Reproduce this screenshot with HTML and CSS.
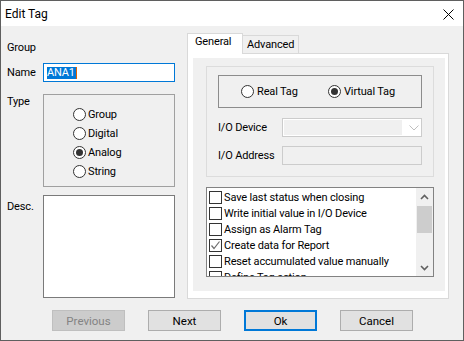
FILE: index.html
```html
<!DOCTYPE html>
<html lang="en">
<head>
    <meta charset="UTF-8">
    <meta name="viewport" content="width=device-width, initial-scale=1.0">
    <title>Edit Tag</title>
    <link rel="stylesheet" href="styles.css">
</head>
<body>
    <div class="window">
        <div class="titlebar">
            <span class="title">Edit Tag</span>
            <svg class="close" width="11" height="11" viewBox="0 0 11 11">
                <path d="M0.5 0.5 L10.5 10.5 M10.5 0.5 L0.5 10.5" stroke="#000" stroke-width="1" fill="none"/>
            </svg>
        </div>

        <div class="client">
            <div class="main">
                <div class="left">
                    <div class="row group-row"><span class="label">Group</span></div>
                    <div class="row name-row">
                        <span class="label">Name</span>
                        <div class="input focused"><span class="selected">ANA1</span><span class="caret"></span></div>
                    </div>
                    <div class="row type-row">
                        <span class="label">Type</span>
                        <div class="type-box">
                            <div class="radio"><span class="dot"></span>Group</div>
                            <div class="radio"><span class="dot"></span>Digital</div>
                            <div class="radio"><span class="dot checked"></span>Analog</div>
                            <div class="radio"><span class="dot"></span>String</div>
                        </div>
                    </div>
                    <div class="row desc-row">
                        <span class="label">Desc.</span>
                        <div class="textarea"></div>
                    </div>
                </div>

                <div class="tabctl">
                    <div class="tabs">
                        <div class="tab active">General</div>
                        <div class="tab">Advanced</div>
                    </div>
                    <div class="tabpage">
                        <div class="inner">
                            <div class="groupbox">
                                <div class="kind-box">
                                    <div class="radio kind"><span class="dot"></span>Real Tag</div>
                                    <div class="radio"><span class="dot checked"></span>Virtual Tag</div>
                                </div>
                                <div class="io-row first">
                                    <span class="io-label">I/O Device</span>
                                    <div class="combo">
                                        <div class="combo-field"></div>
                                        <svg class="combo-arrow" width="10" height="6" viewBox="0 0 10 6">
                                            <polyline points="0.5,0.5 5,5 9.5,0.5" stroke="#bfbfbf" stroke-width="1" fill="none"/>
                                        </svg>
                                    </div>
                                </div>
                                <div class="io-row">
                                    <span class="io-label">I/O Address</span>
                                    <div class="textbox"></div>
                                </div>
                            </div>

                            <div class="checklist">
                                <div class="items">
                                    <div class="item"><span class="box"></span>Save last status when closing</div>
                                    <div class="item"><span class="box"></span>Write initial value in I/O Device</div>
                                    <div class="item"><span class="box"></span>Assign as Alarm Tag</div>
                                    <div class="item">
                                        <span class="box checked">
                                            <svg width="11" height="11" viewBox="0 0 11 11">
                                                <polyline points="1.5,5.5 4,8.5 9.5,1.5" stroke="#6d6d6d" stroke-width="1.2" fill="none"/>
                                            </svg>
                                        </span>Create data for Report
                                    </div>
                                    <div class="item"><span class="box"></span>Reset accumulated value manually</div>
                                    <div class="item"><span class="box"></span>Define Tag action</div>
                                </div>
                                <div class="scrollbar">
                                    <div class="arrow">
                                        <svg width="9" height="6" viewBox="0 0 9 6">
                                            <polyline points="1,5 4.5,1.5 8,5" stroke="#606060" stroke-width="1.6" fill="none"/>
                                        </svg>
                                    </div>
                                    <div class="track"><div class="thumb"></div></div>
                                    <div class="arrow">
                                        <svg width="9" height="6" viewBox="0 0 9 6">
                                            <polyline points="1,1 4.5,4.5 8,1" stroke="#606060" stroke-width="1.6" fill="none"/>
                                        </svg>
                                    </div>
                                </div>
                            </div>
                        </div>
                    </div>
                </div>
            </div>

            <div class="buttons">
                <button class="button" disabled>Previous</button>
                <button class="button">Next</button>
                <button class="button default">Ok</button>
                <button class="button">Cancel</button>
            </div>
        </div>
    </div>
</body>
</html>
```

FILE: styles.css
```css
* {
    box-sizing: border-box;
}

body {
    margin: 0;
    font-family: Roboto, "Liberation Sans", sans-serif;
    font-size: 11px;
    letter-spacing: -0.15px;
    color: #000;
    background: #f0f0f0;
}

.window {
    width: 464px;
    height: 341px;
    border: 1px solid #5f5f5f;
    background: #f0f0f0;
    display: flex;
    flex-direction: column;
}

.titlebar {
    height: 25px;
    background: #fff;
    display: flex;
    align-items: center;
    padding-left: 4px;
    padding-right: 9px;
    flex-shrink: 0;
}

.title {
    font-size: 12px;
    letter-spacing: 0;
}

.close {
    margin-left: auto;
    margin-top: 1px;
}

.client {
    flex-grow: 1;
    padding-top: 7px;
}

.main {
    display: flex;
    padding-left: 6px;
}

/* left column */
.left {
    width: 168px;
}

.row {
    display: flex;
}

.label {
    width: 36px;
    flex-shrink: 0;
    line-height: 14px;
}

.group-row {
    margin-top: 8px;
    height: 14px;
}

.name-row {
    margin-top: 8px;
    height: 19px;
    align-items: center;
}

.input {
    width: 132px;
    height: 19px;
    background: #fff;
    border: 1px solid #7a7a7a;
    padding-left: 3px;
    display: flex;
    align-items: center;
}

.input.focused {
    border-color: #0078d7;
}

.selected {
    background: #0078d7;
    color: #fff;
    line-height: 12px;
    padding-right: 1px;
}

.caret {
    width: 1px;
    height: 12px;
    background: #e06000;
}

.type-row {
    margin-top: 12px;
}

.type-row .label {
    padding-top: 1px;
}

.type-box {
    width: 132px;
    height: 93px;
    border: 1px solid #a0a0a0;
    padding: 10px 0 0 29px;
}

.radio {
    height: 19px;
    display: flex;
    align-items: center;
}

.dot {
    width: 13px;
    height: 13px;
    border: 1px solid #333;
    border-radius: 50%;
    background: #fff;
    margin-right: 2px;
    display: flex;
    align-items: center;
    justify-content: center;
    flex-shrink: 0;
}

.dot.checked::after {
    content: "";
    width: 7px;
    height: 7px;
    border-radius: 50%;
    background: #333;
}

.desc-row {
    margin-top: 8px;
}

.desc-row .label {
    padding-top: 5px;
}

.textarea {
    width: 132px;
    height: 103px;
    background: #fff;
    border: 1px solid #7a7a7a;
}

/* tab control */
.tabctl {
    margin-left: 12px;
    width: 262px;
}

.tabs {
    display: flex;
    align-items: flex-end;
    height: 20px;
}

.tab {
    height: 18px;
    width: 57px;
    border: 1px solid #d9d9d9;
    border-bottom: none;
    background: #f0f0f0;
    padding-left: 4px;
    line-height: 17px;
    margin-left: -1px;
}

.tab.active {
    height: 21px;
    width: 56px;
    margin-left: 0;
    margin-bottom: -1px;
    background: #fff;
    padding-left: 7px;
    line-height: 15px;
    position: relative;
    z-index: 1;
}

.tabpage {
    height: 246px;
    border: 1px solid #d9d9d9;
    background: #fff;
    padding: 4px 0 0 5px;
}

.inner {
    width: 252px;
    height: 233px;
    background: #f0f0f0;
    padding: 8px 0 0 13px;
}

.groupbox {
    width: 228px;
    height: 111px;
    border: 1px solid #dcdcdc;
    padding: 8px 0 0 11px;
}

.kind-box {
    width: 204px;
    height: 33px;
    border: 1px solid #8c8c8c;
    display: flex;
    align-items: center;
    padding-left: 22px;
}

.kind-box .dot {
    margin-right: 3px;
}

.radio.kind {
    width: 87px;
}

.io-row {
    display: flex;
    align-items: center;
    height: 19px;
    margin-top: 9px;
}

.io-row.first {
    margin-top: 10px;
}

.io-label {
    width: 64px;
}

.combo {
    width: 140px;
    height: 19px;
    border: 1px solid #cccccc;
    background: #fff;
    display: flex;
    align-items: center;
    padding: 1px;
}

.combo-field {
    width: 118px;
    height: 15px;
    background: #f0f0f0;
}

.combo-arrow {
    margin-left: 7px;
}

.textbox {
    width: 140px;
    height: 19px;
    border: 1px solid #cccccc;
    background: #f0f0f0;
}

.checklist {
    margin-top: 10px;
    width: 228px;
    height: 90px;
    border: 1px solid #828282;
    background: #fff;
    display: flex;
}

.items {
    flex-grow: 1;
    overflow: hidden;
    padding: 1px 0 0 2px;
}

.item {
    height: 16px;
    display: flex;
    align-items: center;
    white-space: nowrap;
}

.box {
    width: 13px;
    height: 13px;
    border: 1px solid #333;
    background: #fff;
    margin-right: 2px;
    flex-shrink: 0;
    display: flex;
    align-items: center;
    justify-content: center;
}

.scrollbar {
    width: 17px;
    background: #f0f0f0;
    display: flex;
    flex-direction: column;
}

.arrow {
    height: 17px;
    display: flex;
    align-items: center;
    justify-content: center;
}

.track {
    flex-grow: 1;
    padding: 1px 1px 0;
}

.thumb {
    height: 27px;
    background: #cdcdcd;
}

/* buttons */
.buttons {
    display: flex;
    gap: 23px;
    padding-left: 51px;
    margin-top: 11px;
}

.button {
    width: 73px;
    height: 21px;
    border: 1px solid #adadad;
    background: #e1e1e1;
    font-family: inherit;
    font-size: 11.5px;
    color: #000;
    padding: 0;
}

.button:disabled {
    background: #cccccc;
    border-color: #bfbfbf;
    color: #838383;
}

.button.default {
    border: 2px solid #0078d7;
}
```
